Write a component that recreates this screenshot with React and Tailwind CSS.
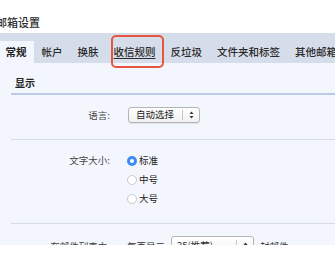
import React from 'react';

const FONT = { fontFamily: '"Noto Sans CJK SC", "Noto Sans", sans-serif' };

const tabs = ['常规', '帐户', '换肤', '收信规则', '反垃圾', '文件夹和标签', '其他邮箱'];

const Arrows = () => (
  <svg width="5" height="8" viewBox="0 0 5 8" className="block">
    <path d="M2.5 0.5 L4.5 3 H0.5 Z" fill="#333" />
    <path d="M2.5 7.5 L4.5 5 H0.5 Z" fill="#333" />
  </svg>
);

const Select = ({ label, width }) => (
  <div
    className="flex h-[16px] items-center rounded-[3px] border border-[#b4b4b4] bg-gradient-to-b from-white to-[#f1f1f1] shadow-[0_1px_1px_rgba(0,0,0,0.08)]"
    style={{ width }}
  >
    <span className="flex-1 pl-[7px] leading-none text-[#222]">{label}</span>
    <span className="h-[10px] w-px bg-[#c4c4c4]" />
    <span className="flex w-[16px] justify-center">
      <Arrows />
    </span>
  </div>
);

const Radio = ({ checked, label }) => (
  <div className="flex h-[19px] items-center gap-[2px]">
    {checked ? (
      <span className="flex h-[10px] w-[10px] items-center justify-center rounded-full bg-[#3b8bf2]">
        <span className="h-[4px] w-[4px] rounded-full bg-white" />
      </span>
    ) : (
      <span className="h-[10px] w-[10px] rounded-full border border-[#c9c9c9] bg-white" />
    )}
    <span className="text-[#222]">{label}</span>
  </div>
);

const App = () => {
  return (
    <div className="relative h-[257px] w-[335px] overflow-hidden bg-white" style={FONT}>
      {/* page title */}
      <div className="h-[33px] pt-[15px] -ml-[4px] text-[11px] font-medium leading-[14px] text-[#2b2b2b]">邮箱设置</div>

      {/* tab bar */}
      <div className="flex h-[30px] items-end whitespace-nowrap bg-[#d6ddea] text-[10.5px] font-medium text-[#2b2b2b]">
        {tabs.map((t, i) => (
          <div
            key={t}
            className={
              i === 0
                ? '-ml-[2px] flex h-[22px] items-center bg-[#f3f6fc] px-[7.5px] font-bold text-[#1f1f1f]'
                : 'flex h-[22px] items-center px-[7.5px]'
            }
          >
            <span className={i === 3 ? 'underline underline-offset-2' : ''}>{t}</span>
          </div>
        ))}
      </div>

      {/* highlight box */}
      <div className="absolute left-[111px] top-[35px] h-[33px] w-[53px] rounded-[5px] border-2 border-[#e8553f]" />

      {/* settings content */}
      <div className="h-[182px] overflow-hidden bg-[#f3f6fc] pl-[11px] text-[9.5px] text-[#333]">
        <div className="h-[32px] border-b-2 border-[#bacbe3] pl-[4px] pt-[13px] text-[10px] font-bold leading-[14px] text-[#222]">
          显示
        </div>

        <div className="flex h-[45px] items-start border-b border-[#d7dde7] pt-[12px]">
          <div className="w-[101px] pr-[2px] text-right leading-[16px] text-[#444]">语言:</div>
          <div className="ml-[16px]">
            <Select label="自动选择" width="72px" />
          </div>
        </div>

        <div className="flex h-[84px] items-start border-b border-[#d7dde7] pt-[11px]">
          <div className="w-[101px] pr-[2px] text-right leading-[19px] text-[#444]">文字大小:</div>
          <div className="ml-[15px] flex flex-col">
            <Radio checked label="标准" />
            <Radio label="中号" />
            <Radio label="大号" />
          </div>
        </div>

        <div className="flex items-start pt-[12px]">
          <div className="w-[101px] pr-[2px] text-right leading-[20px] text-[#444]">在邮件列表中:</div>
          <div className="ml-[15px] flex items-center gap-[6px] leading-[20px]">
            <span>每页显示</span>
            <div className="flex h-[20px] w-[83px] items-center rounded-[3px] border border-[#b4b4b4] bg-gradient-to-b from-white to-[#f1f1f1]">
              <span className="flex-1 pl-[5px] leading-none">25(推荐)</span>
              <span className="h-[12px] w-px bg-[#c4c4c4]" />
              <span className="flex w-[16px] justify-center">
                <Arrows />
              </span>
            </div>
            <span>封邮件</span>
          </div>
        </div>
      </div>
    </div>
  );
};

export default App;
